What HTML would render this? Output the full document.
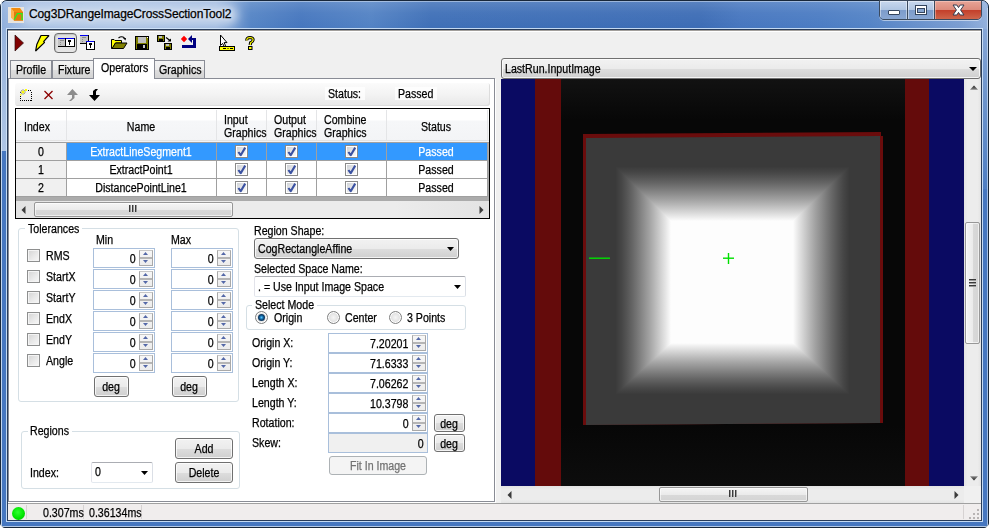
<!DOCTYPE html>
<html><head><meta charset="utf-8">
<style>
*{box-sizing:border-box;}
html,body{margin:0;padding:0;}
body{width:989px;height:528px;position:relative;overflow:hidden;font-family:"Liberation Sans",sans-serif;font-size:12px;color:#000;background:#fff;}
.a{position:absolute;}
.t{position:absolute;white-space:nowrap;line-height:13px;font-size:12px;transform:scaleX(0.885);transform-origin:0 0;-webkit-text-stroke:0.25px currentColor;}
.tr{transform-origin:100% 0;}
.tc{text-align:center;transform-origin:50% 0;}
.tab{position:absolute;border:1px solid #898c95;border-bottom:none;background:linear-gradient(#f3f3f3 0%,#ececec 50%,#dedede 51%,#d3d3d3 100%);}
.tabsel{position:absolute;border:1px solid #898c95;border-bottom:none;background:#fff;}
.grp{position:absolute;border:1px solid #d5dfe5;border-radius:3px;}
.chk{position:absolute;width:13px;height:13px;border:1px solid #8e8f8f;background:linear-gradient(135deg,#d3d3d3 0%,#e9e9e9 55%,#f8f8f8 100%);box-shadow:inset 0 0 0 1px #f4f4f4;}
.spin{position:absolute;border:1px solid #a9bfdb;background:#fff;}
.btn{position:absolute;border:1px solid #707070;border-radius:3px;background:linear-gradient(#f2f2f2 0%,#ebebeb 50%,#dddddd 51%,#cfcfcf 100%);box-shadow:inset 0 0 0 1px rgba(255,255,255,0.75);}
.radio{position:absolute;width:13px;height:13px;border-radius:50%;border:1px solid #7f8080;background:radial-gradient(circle at 50% 50%,#f6f6f6 0%,#e2e2e2 55%,#cfcfcf 100%);box-shadow:inset 0 0 0 1px #fff;}
.gl{position:absolute;background:#a0a0a0;}
.arr{position:absolute;}
</style></head>
<body>
<div class="a" style="left:0;top:0;width:989px;height:528px;border:1px solid #18273a;border-radius:7px 7px 5px 5px;background:#4677c0;"></div>
<div class="a" style="left:1px;top:1px;width:987px;height:28px;border-radius:6px 6px 0 0;background:linear-gradient(90deg,#8eaedc 0px,#9fbae2 14px,#a9c1e3 120px,#9ab6de 215px,#5484c5 250px,#4576be 300px,#5282c4 370px,#3e6fb7 430px,#3c6cb5 700px,#4676bf 740px,#4b7cc3 820px,#5383c6 870px,#7a9dd1 960px,#92b0dc 987px);"></div>
<div class="a" style="left:1px;top:1px;width:987px;height:28px;border-radius:6px 6px 0 0;background:linear-gradient(#dfe9f5 0,rgba(255,255,255,0.15) 1px,rgba(255,255,255,0.05) 12px,rgba(0,0,0,0) 28px);"></div>
<div class="a" style="left:20px;top:5px;width:218px;height:20px;border-radius:10px;background:rgba(198,214,236,0.95);filter:blur(4px);"></div>
<div class="a" style="left:1px;top:29px;width:6px;height:122px;background:linear-gradient(#96b3dc,#aec5e5);"></div>
<div class="a" style="left:982px;top:29px;width:6px;height:160px;background:linear-gradient(#86a6d6,#6e95cc 40%,#4e7ec3 100%);"></div>
<div class="a" style="left:1px;top:1px;width:1px;height:526px;background:rgba(225,236,248,0.8);"></div>
<div class="a" style="left:987px;top:8px;width:1px;height:519px;background:rgba(225,236,248,0.6);"></div>
<div class="a" style="left:1px;top:526px;width:987px;height:1px;background:rgba(225,236,248,0.7);"></div>
<div class="a" style="left:6px;top:28px;width:977px;height:494px;border:1px solid rgba(210,228,248,0.9);"></div>
<div class="a" style="left:7px;top:29px;width:975px;height:492px;border:1px solid #283c5a;background:#f0f0f0;"></div>
<div class="a" style="left:8px;top:30px;width:973px;height:1px;background:#a29f9c;"></div>
<div class="a" style="left:8px;top:31px;width:973px;height:1px;background:#fff;"></div>
<svg class="a" style="left:8px;top:7px" width="16" height="16" viewBox="0 0 16 16">
 <rect x="0" y="0" width="16" height="16" fill="#e8e4de"/>
 <polygon points="3,1 6,5 6,13.8 3,10.5" fill="#ffb24e"/>
 <polygon points="3,1 12,1 15,5 6,5" fill="#f28c0e"/>
 <polygon points="6,5 15,5 15,13.8 6,13.8" fill="#df7a0c"/>
 <polyline points="6.2,12.6 9.4,6.6 14,6.6 14,12.4 15,12.4" fill="none" stroke="#22f022" stroke-width="1.2"/>
</svg>
<div class="t" style="left:29px;top:7px;font-size:12px;line-height:15px;transform:none;letter-spacing:-0.12px;text-shadow:0 0 5px rgba(255,255,255,0.9);">Cog3DRangeImageCrossSectionTool2</div>
<div class="a" style="left:879px;top:0px;width:103px;height:20px;border:1px solid #3b4a5e;border-radius:0 0 5px 5px;overflow:hidden;box-shadow:0 1px 0 rgba(255,255,255,0.5);">
 <div class="a" style="left:0;top:0;width:28px;height:19px;background:linear-gradient(#c8d8ee 0%,#b0c6e2 45%,#7d9ccb 50%,#8aa8d4 100%);border-right:1px solid #3b4a5e;box-shadow:inset 0 0 0 1px rgba(255,255,255,0.45);"></div>
 <div class="a" style="left:28px;top:0;width:27px;height:19px;background:linear-gradient(#c8d8ee 0%,#b0c6e2 45%,#7d9ccb 50%,#8aa8d4 100%);border-right:1px solid #3b4a5e;box-shadow:inset 0 0 0 1px rgba(255,255,255,0.45);"></div>
 <div class="a" style="left:55px;top:0;width:48px;height:19px;background:linear-gradient(#e7a497 0%,#dc8b7c 45%,#c3402b 50%,#cf6a4f 100%);box-shadow:inset 0 0 0 1px rgba(255,220,210,0.45);"></div>
</div>
<div class="a" style="left:888px;top:10px;width:12px;height:5px;background:#fff;border:1px solid #34455e;border-radius:1px;"></div>
<div class="a" style="left:915px;top:5px;width:12px;height:10px;border:1px solid #34455e;background:#fff;"></div>
<div class="a" style="left:917px;top:8px;width:8px;height:5px;border:1px solid #34455e;background:#88a5cf;"></div>
<svg class="a" style="left:952px;top:4px" width="13" height="12" viewBox="0 0 13 12">
 <polygon points="1,1 4.8,1 6.5,3.6 8.2,1 12,1 8.6,6 12,11 8.2,11 6.5,8.4 4.8,11 1,11 4.4,6" fill="#fff" stroke="#343a4e" stroke-width="1" stroke-linejoin="round"/>
</svg>
<div class="a" style="left:54px;top:33px;width:23px;height:20px;border:1px solid #6b6b6b;border-radius:4px;background:linear-gradient(#e2e2e2,#dedede 60%,#e6e6e6);box-shadow:inset 1px 1px 1px #c2c2c2;"></div>
<svg class="a" style="left:0;top:30px" width="270" height="25" viewBox="0 30 270 25">
 <polygon points="15,35 23.5,43 15,51" fill="#800000" stroke="#2b0a0a" stroke-width="0.7"/>
 <polygon points="41,35.5 49,35.5 43.6,41.6 44.6,42.4 35.6,51 36.8,44.6" fill="#ffff00" stroke="#000" stroke-width="1.2" stroke-linejoin="bevel"/>
 <g shape-rendering="crispEdges">
  <rect x="58" y="38" width="8" height="9" fill="#000"/><rect x="58" y="38" width="7" height="8" fill="#c4c4c4"/><rect x="58" y="38" width="7" height="1" fill="#0000f0"/>
  <rect x="60" y="40" width="4" height="1" fill="#8c8c8c"/><rect x="60" y="42" width="1" height="1" fill="#8c8c8c"/><rect x="60" y="44" width="1" height="1" fill="#8c8c8c"/>
  <rect x="65" y="38" width="10" height="9" fill="#000"/><rect x="66" y="38" width="8" height="8" fill="#fff"/><rect x="66" y="38" width="8" height="1" fill="#0000f0"/>
  <rect x="68" y="40" width="3" height="2" fill="#000"/><rect x="69" y="42" width="1" height="3" fill="#000"/>
  <rect x="80" y="35" width="9" height="9" fill="#000"/><rect x="80" y="35" width="8" height="8" fill="#c4c4c4"/><rect x="80" y="35" width="8" height="1" fill="#0000f0"/>
  <rect x="82" y="37" width="4" height="1" fill="#8c8c8c"/><rect x="82" y="39" width="1" height="1" fill="#8c8c8c"/><rect x="82" y="41" width="1" height="1" fill="#8c8c8c"/>
  <rect x="86" y="41" width="9" height="9" fill="#000"/><rect x="87" y="41" width="7" height="8" fill="#fff"/><rect x="86" y="41" width="8" height="1" fill="#0000f0"/>
  <rect x="89" y="43" width="3" height="2" fill="#000"/><rect x="90" y="45" width="1" height="3" fill="#000"/>
 </g>
 <polygon points="111.5,39.5 114,39.5 115,40.5 121.5,40.5 121.5,43 115.5,43 112.5,48.5 111.5,48.5" fill="#ffff00" stroke="#000" stroke-width="1"/>
 <polygon points="112,48.5 115.5,43 127,43 123.5,48.5" fill="#808000" stroke="#000" stroke-width="1"/>
 <path d="M118.5,38 Q121.5,35.5 124.5,38" fill="none" stroke="#000" stroke-width="1.1"/>
 <polygon points="123,38 126,38 125.5,40.5" fill="#000"/>
 <g shape-rendering="crispEdges">
  <rect x="135" y="36" width="14" height="14" fill="#000"/><rect x="136" y="37" width="12" height="12" fill="#808000"/>
  <rect x="138" y="37" width="8" height="6" fill="#c0c0c0"/><rect x="137" y="44" width="10" height="5" fill="#000"/><rect x="143" y="45" width="2" height="3" fill="#c8c8c8"/>
  <rect x="147" y="37" width="1" height="1" fill="#fff"/>
  <rect x="157" y="35" width="8" height="7" fill="#000"/><rect x="158" y="36" width="6" height="5" fill="#808000"/><rect x="159" y="36" width="3" height="2" fill="#c0c0c0"/><rect x="159" y="39" width="4" height="2" fill="#000"/>
  <rect x="164" y="43" width="8" height="7" fill="#000"/><rect x="165" y="44" width="6" height="5" fill="#808000"/><rect x="166" y="44" width="3" height="2" fill="#c0c0c0"/><rect x="166" y="47" width="4" height="2" fill="#000"/>
 </g>
 <path d="M166,37.5 L170,40.5" stroke="#000" stroke-width="1.2"/><polygon points="171,41.5 167.5,41.5 171,38.5" fill="#000"/>
 <polygon points="184,35.8 187.2,39 184,42.2 180.8,39" fill="#ff0000"/>
 <g shape-rendering="crispEdges" fill="#000080">
  <rect x="189" y="38" width="7" height="2"/><rect x="193" y="38" width="3" height="10"/><rect x="182" y="45" width="14" height="3"/>
 </g>
 <polygon points="188,39 192,35 192,43" fill="#000080"/>
 <polygon points="220.5,35 220.5,45.5 222.6,43.4 224.2,46.5 225.6,45.8 224.1,42.6 227,42.6" fill="#fff" stroke="#000" stroke-width="1"/>
 <rect x="219.5" y="46.5" width="15" height="4" fill="#ffff00" stroke="#000" stroke-width="1"/>
 <path d="M223,48.5 h3 M227.5,48.5 h1 M230,48.5 h3" stroke="#000" stroke-width="1"/>
 <path d="M246.8,40.5 Q246.5,37.6 250,37.5 Q253.2,37.5 253.1,40 Q253,41.6 250.6,42.8 L250.2,45" fill="none" stroke="#000" stroke-width="3.2"/>
 <path d="M246.8,40.5 Q246.5,37.6 250,37.5 Q253.2,37.5 253.1,40 Q253,41.6 250.6,42.8 L250.2,45" fill="none" stroke="#ffff00" stroke-width="1.2"/>
 <rect x="248.5" y="46.5" width="3.5" height="3" fill="#ffff00" stroke="#000" stroke-width="1"/>
</svg>
<div class="a" style="left:8px;top:78px;width:487px;height:424px;border:1px solid #898c95;background:#fff;"></div>
<div class="a" style="left:495px;top:79px;width:1px;height:424px;background:#fff;"></div>
<div class="a" style="left:8px;top:502px;width:488px;height:1px;background:#fff;"></div>
<div class="tab" style="left:10px;top:60px;width:42px;height:18px;"></div>
<div class="t" style="left:15.5px;top:64px;">Profile</div>
<div class="tab" style="left:52px;top:60px;width:42px;height:18px;"></div>
<div class="t" style="left:57.5px;top:64px;">Fixture</div>
<div class="tab" style="left:154px;top:60px;width:51px;height:18px;"></div>
<div class="t" style="left:158.5px;top:64px;">Graphics</div>
<div class="tabsel" style="left:93px;top:58px;width:62px;height:21px;"></div>
<div class="t" style="left:100.5px;top:62px;">Operators</div>
<div class="a" style="left:15px;top:83px;width:475px;height:23px;border-radius:3px;background:linear-gradient(#fbfbfb,#f3f3f3 50%,#e7e7e7);box-shadow:inset -1px -1px 0 #dcdcdc;"></div>
<svg class="a" style="left:0;top:80px" width="110" height="25" viewBox="0 80 110 25">
 <g shape-rendering="crispEdges" fill="#000"><rect x="20" y="100" width="1" height="1"/><rect x="22" y="100" width="1" height="1"/><rect x="24" y="100" width="1" height="1"/><rect x="26" y="100" width="1" height="1"/><rect x="28" y="100" width="1" height="1"/><rect x="30" y="100" width="1" height="1"/><rect x="20" y="92" width="1" height="1"/><rect x="31" y="92" width="1" height="1"/><rect x="20" y="94" width="1" height="1"/><rect x="31" y="94" width="1" height="1"/><rect x="20" y="96" width="1" height="1"/><rect x="31" y="96" width="1" height="1"/><rect x="20" y="98" width="1" height="1"/><rect x="31" y="98" width="1" height="1"/><rect x="20" y="100" width="1" height="1"/><rect x="31" y="100" width="1" height="1"/><rect x="26" y="90" width="1" height="1"/><rect x="28" y="90" width="1" height="1"/><rect x="30" y="90" width="1" height="1"/></g>
 <path d="M20,92 L26,92 M23,89 L23,95 M21,90 L25,94 M25,90 L21,94" stroke="#9a9a9a" stroke-width="0.9"/>
 <path d="M21.5,92 L24.5,92 M23,90.5 L23,93.5" stroke="#ffff00" stroke-width="1.4"/>
 <rect x="25" y="89" width="2" height="2" fill="#ffff00"/><rect x="20" y="94" width="1.5" height="1.5" fill="#ffff00"/>
 <path d="M44.5,91 L52.5,99 M52.5,91 L44.5,99" stroke="#8b0000" stroke-width="1.3"/>
 <polygon points="72.4,89 78,95 74.5,95 74.5,98 71,101 69,101 72,98 72,95 67,95" fill="#8c8c8c"/>
 <polygon points="89,95 93,95 93,91 95.5,89 98,89 96,91.5 96,95 100,95 94.5,101" fill="#000"/>
</svg>
<div class="a" style="left:325px;top:87px;width:40px;height:13px;background:#fff;opacity:0.75;"></div>
<div class="t" style="left:327.5px;top:88px;">Status:</div>
<div class="a" style="left:395px;top:87px;width:42px;height:13px;background:#fff;opacity:0.75;"></div>
<div class="t" style="left:397.5px;top:88px;">Passed</div>
<div class="a" style="left:15px;top:108px;width:475px;height:111px;border:1px solid #000;background:#ababab;"></div>
<div class="a" style="left:16px;top:109px;width:473px;height:33px;background:linear-gradient(#fff 0,#fff 11px,#f6f7f9 12px,#f3f4f6 100%);"></div>
<div class="a" style="left:16px;top:140px;width:473px;height:1px;background:#e3e3e3;"></div>
<div class="a" style="left:16px;top:142px;width:473px;height:1px;background:#a0a0a0;"></div>
<div class="a" style="left:16px;top:143px;width:472px;height:53px;background:#fff;"></div>
<div class="a" style="left:16px;top:143px;width:50px;height:53px;background:#f0f0f0;"></div>
<div class="a" style="left:67px;top:143px;width:421px;height:17px;background:#3399ff;"></div>
<div class="gl" style="left:16px;top:160px;width:472px;height:1px;"></div>
<div class="gl" style="left:16px;top:178px;width:472px;height:1px;"></div>
<div class="gl" style="left:16px;top:196px;width:472px;height:1px;"></div>
<div class="gl" style="left:66px;top:143px;width:1px;height:53px;"></div>
<div class="a" style="left:66px;top:110px;width:1px;height:30px;background:#e4e5e7;"></div>
<div class="gl" style="left:216px;top:143px;width:1px;height:53px;"></div>
<div class="a" style="left:216px;top:110px;width:1px;height:30px;background:#e4e5e7;"></div>
<div class="gl" style="left:266px;top:143px;width:1px;height:53px;"></div>
<div class="a" style="left:266px;top:110px;width:1px;height:30px;background:#e4e5e7;"></div>
<div class="gl" style="left:316px;top:143px;width:1px;height:53px;"></div>
<div class="a" style="left:316px;top:110px;width:1px;height:30px;background:#e4e5e7;"></div>
<div class="gl" style="left:386px;top:143px;width:1px;height:53px;"></div>
<div class="a" style="left:386px;top:110px;width:1px;height:30px;background:#e4e5e7;"></div>
<div class="gl" style="left:487px;top:143px;width:1px;height:53px;"></div>
<div class="a" style="left:487px;top:110px;width:1px;height:30px;background:#e4e5e7;"></div>
<div class="t" style="left:23.5px;top:121px;">Index</div>
<div class="t tc" style="left:-9px;width:300px;top:121px;">Name</div>
<div class="t" style="left:223.5px;top:114px;">Input</div>
<div class="t" style="left:223.5px;top:127px;">Graphics</div>
<div class="t" style="left:273.5px;top:114px;">Output</div>
<div class="t" style="left:273.5px;top:127px;">Graphics</div>
<div class="t" style="left:323.5px;top:114px;">Combine</div>
<div class="t" style="left:323.5px;top:127px;">Graphics</div>
<div class="t tc" style="left:286px;width:300px;top:121px;">Status</div>
<div class="t tc" style="left:-109px;width:300px;top:146px;">0</div>
<div class="t tc" style="left:-109px;width:300px;top:164px;">1</div>
<div class="t tc" style="left:-109px;width:300px;top:182px;">2</div>
<div class="t tc" style="left:-9px;width:300px;top:146px;color:#fff;">ExtractLineSegment1</div>
<div class="t tc" style="left:-9px;width:300px;top:164px;">ExtractPoint1</div>
<div class="t tc" style="left:-9px;width:300px;top:182px;">DistancePointLine1</div>
<div class="t tc" style="left:286px;width:300px;top:146px;color:#fff;">Passed</div>
<div class="t tc" style="left:286px;width:300px;top:164px;">Passed</div>
<div class="t tc" style="left:286px;width:300px;top:182px;">Passed</div>
<svg width="0" height="0" style="position:absolute"><defs><linearGradient id="cg" x1="0" y1="0" x2="1" y2="1"><stop offset="0" stop-color="#cfd2d6"/><stop offset="0.6" stop-color="#ebecee"/><stop offset="1" stop-color="#fafafa"/></linearGradient></defs></svg>
<svg class="a" style="left:235px;top:145px" width="13" height="13" viewBox="0 0 13 13"><rect x="0.5" y="0.5" width="12" height="12" fill="#fff" stroke="#8a8a8a"/><rect x="2" y="2" width="9" height="9" fill="url(#cg)"/><path d="M3.4,7 L5.7,10.2 L10.2,2.6" fill="none" stroke="#3b52a2" stroke-width="2.1" stroke-linejoin="round"/></svg>
<svg class="a" style="left:285px;top:145px" width="13" height="13" viewBox="0 0 13 13"><rect x="0.5" y="0.5" width="12" height="12" fill="#fff" stroke="#8a8a8a"/><rect x="2" y="2" width="9" height="9" fill="url(#cg)"/><path d="M3.4,7 L5.7,10.2 L10.2,2.6" fill="none" stroke="#3b52a2" stroke-width="2.1" stroke-linejoin="round"/></svg>
<svg class="a" style="left:345px;top:145px" width="13" height="13" viewBox="0 0 13 13"><rect x="0.5" y="0.5" width="12" height="12" fill="#fff" stroke="#8a8a8a"/><rect x="2" y="2" width="9" height="9" fill="url(#cg)"/><path d="M3.4,7 L5.7,10.2 L10.2,2.6" fill="none" stroke="#3b52a2" stroke-width="2.1" stroke-linejoin="round"/></svg>
<svg class="a" style="left:235px;top:163px" width="13" height="13" viewBox="0 0 13 13"><rect x="0.5" y="0.5" width="12" height="12" fill="#fff" stroke="#8a8a8a"/><rect x="2" y="2" width="9" height="9" fill="url(#cg)"/><path d="M3.4,7 L5.7,10.2 L10.2,2.6" fill="none" stroke="#3b52a2" stroke-width="2.1" stroke-linejoin="round"/></svg>
<svg class="a" style="left:285px;top:163px" width="13" height="13" viewBox="0 0 13 13"><rect x="0.5" y="0.5" width="12" height="12" fill="#fff" stroke="#8a8a8a"/><rect x="2" y="2" width="9" height="9" fill="url(#cg)"/><path d="M3.4,7 L5.7,10.2 L10.2,2.6" fill="none" stroke="#3b52a2" stroke-width="2.1" stroke-linejoin="round"/></svg>
<svg class="a" style="left:345px;top:163px" width="13" height="13" viewBox="0 0 13 13"><rect x="0.5" y="0.5" width="12" height="12" fill="#fff" stroke="#8a8a8a"/><rect x="2" y="2" width="9" height="9" fill="url(#cg)"/><path d="M3.4,7 L5.7,10.2 L10.2,2.6" fill="none" stroke="#3b52a2" stroke-width="2.1" stroke-linejoin="round"/></svg>
<svg class="a" style="left:235px;top:181px" width="13" height="13" viewBox="0 0 13 13"><rect x="0.5" y="0.5" width="12" height="12" fill="#fff" stroke="#8a8a8a"/><rect x="2" y="2" width="9" height="9" fill="url(#cg)"/><path d="M3.4,7 L5.7,10.2 L10.2,2.6" fill="none" stroke="#3b52a2" stroke-width="2.1" stroke-linejoin="round"/></svg>
<svg class="a" style="left:285px;top:181px" width="13" height="13" viewBox="0 0 13 13"><rect x="0.5" y="0.5" width="12" height="12" fill="#fff" stroke="#8a8a8a"/><rect x="2" y="2" width="9" height="9" fill="url(#cg)"/><path d="M3.4,7 L5.7,10.2 L10.2,2.6" fill="none" stroke="#3b52a2" stroke-width="2.1" stroke-linejoin="round"/></svg>
<svg class="a" style="left:345px;top:181px" width="13" height="13" viewBox="0 0 13 13"><rect x="0.5" y="0.5" width="12" height="12" fill="#fff" stroke="#8a8a8a"/><rect x="2" y="2" width="9" height="9" fill="url(#cg)"/><path d="M3.4,7 L5.7,10.2 L10.2,2.6" fill="none" stroke="#3b52a2" stroke-width="2.1" stroke-linejoin="round"/></svg>
<div class="a" style="left:16px;top:201px;width:473px;height:17px;background:linear-gradient(90deg,#e3e3e3,#ececec 20%,#ececec 80%,#e3e3e3);"></div>
<svg class="a" style="left:21px;top:206px" width="5" height="8" viewBox="0 0 5 8"><polygon points="4.5,0 0.5,4 4.5,8" fill="#3b3b3b"/></svg>
<svg class="a" style="left:479px;top:206px" width="5" height="8" viewBox="0 0 5 8"><polygon points="0.5,0 4.5,4 0.5,8" fill="#3b3b3b"/></svg>
<div class="a" style="left:34px;top:202px;width:199px;height:15px;border:1px solid #979797;border-radius:2px;background:linear-gradient(#f5f5f5,#ebebeb 50%,#d9d9d9 51%,#d4d4d4);box-shadow:inset 0 0 0 1px rgba(255,255,255,0.6);"></div>
<div class="a" style="left:129px;top:205px;width:1px;height:7px;background:#3a3a3a;box-shadow:1px 0 0 #9a9a9a,3px 0 0 #3a3a3a,4px 0 0 #9a9a9a,6px 0 0 #3a3a3a,7px 0 0 #9a9a9a;"></div>
<div class="grp" style="left:18px;top:228px;width:221px;height:174px;"></div>
<div class="a" style="left:25px;top:222px;width:57px;height:12px;background:#fff;"></div>
<div class="t" style="left:27.5px;top:223px;">Tolerances</div>
<div class="t" style="left:95.5px;top:234px;">Min</div>
<div class="t" style="left:170.5px;top:234px;">Max</div>
<div class="chk" style="left:27px;top:249px;"></div>
<div class="t" style="left:45.5px;top:250px;">RMS</div>
<div class="chk" style="left:27px;top:270px;"></div>
<div class="t" style="left:45.5px;top:271px;">StartX</div>
<div class="chk" style="left:27px;top:291px;"></div>
<div class="t" style="left:45.5px;top:292px;">StartY</div>
<div class="chk" style="left:27px;top:312px;"></div>
<div class="t" style="left:45.5px;top:313px;">EndX</div>
<div class="chk" style="left:27px;top:333px;"></div>
<div class="t" style="left:45.5px;top:334px;">EndY</div>
<div class="chk" style="left:27px;top:354px;"></div>
<div class="t" style="left:45.5px;top:355px;">Angle</div>
<div class="spin" style="left:93px;top:248px;width:62px;height:20px;background:#fff;"></div>
<div class="a" style="left:139px;top:250px;width:14px;height:16px;border:1px solid #a9a9a9;border-top-color:#c8c8c8;background:linear-gradient(#f7f7f7,#ececec);"></div>
<div class="a" style="left:140px;top:257px;width:12px;height:2px;background:#b5b5b5;"></div>
<svg class="a" style="left:143px;top:252px" width="5" height="3" viewBox="0 0 5 3"><polygon points="0,3 2.5,0 5,3" fill="#5468a8"/></svg>
<svg class="a" style="left:143px;top:260px" width="5" height="3" viewBox="0 0 5 3"><polygon points="0,0 2.5,3 5,0" fill="#5468a8"/></svg>
<div class="t tr" style="right:853.5px;top:253px;">0</div>
<div class="spin" style="left:171px;top:248px;width:62px;height:20px;background:#fff;"></div>
<div class="a" style="left:217px;top:250px;width:14px;height:16px;border:1px solid #a9a9a9;border-top-color:#c8c8c8;background:linear-gradient(#f7f7f7,#ececec);"></div>
<div class="a" style="left:218px;top:257px;width:12px;height:2px;background:#b5b5b5;"></div>
<svg class="a" style="left:221px;top:252px" width="5" height="3" viewBox="0 0 5 3"><polygon points="0,3 2.5,0 5,3" fill="#5468a8"/></svg>
<svg class="a" style="left:221px;top:260px" width="5" height="3" viewBox="0 0 5 3"><polygon points="0,0 2.5,3 5,0" fill="#5468a8"/></svg>
<div class="t tr" style="right:775.5px;top:253px;">0</div>
<div class="spin" style="left:93px;top:269px;width:62px;height:20px;background:#fff;"></div>
<div class="a" style="left:139px;top:271px;width:14px;height:16px;border:1px solid #a9a9a9;border-top-color:#c8c8c8;background:linear-gradient(#f7f7f7,#ececec);"></div>
<div class="a" style="left:140px;top:278px;width:12px;height:2px;background:#b5b5b5;"></div>
<svg class="a" style="left:143px;top:273px" width="5" height="3" viewBox="0 0 5 3"><polygon points="0,3 2.5,0 5,3" fill="#5468a8"/></svg>
<svg class="a" style="left:143px;top:281px" width="5" height="3" viewBox="0 0 5 3"><polygon points="0,0 2.5,3 5,0" fill="#5468a8"/></svg>
<div class="t tr" style="right:853.5px;top:274px;">0</div>
<div class="spin" style="left:171px;top:269px;width:62px;height:20px;background:#fff;"></div>
<div class="a" style="left:217px;top:271px;width:14px;height:16px;border:1px solid #a9a9a9;border-top-color:#c8c8c8;background:linear-gradient(#f7f7f7,#ececec);"></div>
<div class="a" style="left:218px;top:278px;width:12px;height:2px;background:#b5b5b5;"></div>
<svg class="a" style="left:221px;top:273px" width="5" height="3" viewBox="0 0 5 3"><polygon points="0,3 2.5,0 5,3" fill="#5468a8"/></svg>
<svg class="a" style="left:221px;top:281px" width="5" height="3" viewBox="0 0 5 3"><polygon points="0,0 2.5,3 5,0" fill="#5468a8"/></svg>
<div class="t tr" style="right:775.5px;top:274px;">0</div>
<div class="spin" style="left:93px;top:290px;width:62px;height:20px;background:#fff;"></div>
<div class="a" style="left:139px;top:292px;width:14px;height:16px;border:1px solid #a9a9a9;border-top-color:#c8c8c8;background:linear-gradient(#f7f7f7,#ececec);"></div>
<div class="a" style="left:140px;top:299px;width:12px;height:2px;background:#b5b5b5;"></div>
<svg class="a" style="left:143px;top:294px" width="5" height="3" viewBox="0 0 5 3"><polygon points="0,3 2.5,0 5,3" fill="#5468a8"/></svg>
<svg class="a" style="left:143px;top:302px" width="5" height="3" viewBox="0 0 5 3"><polygon points="0,0 2.5,3 5,0" fill="#5468a8"/></svg>
<div class="t tr" style="right:853.5px;top:295px;">0</div>
<div class="spin" style="left:171px;top:290px;width:62px;height:20px;background:#fff;"></div>
<div class="a" style="left:217px;top:292px;width:14px;height:16px;border:1px solid #a9a9a9;border-top-color:#c8c8c8;background:linear-gradient(#f7f7f7,#ececec);"></div>
<div class="a" style="left:218px;top:299px;width:12px;height:2px;background:#b5b5b5;"></div>
<svg class="a" style="left:221px;top:294px" width="5" height="3" viewBox="0 0 5 3"><polygon points="0,3 2.5,0 5,3" fill="#5468a8"/></svg>
<svg class="a" style="left:221px;top:302px" width="5" height="3" viewBox="0 0 5 3"><polygon points="0,0 2.5,3 5,0" fill="#5468a8"/></svg>
<div class="t tr" style="right:775.5px;top:295px;">0</div>
<div class="spin" style="left:93px;top:311px;width:62px;height:20px;background:#fff;"></div>
<div class="a" style="left:139px;top:313px;width:14px;height:16px;border:1px solid #a9a9a9;border-top-color:#c8c8c8;background:linear-gradient(#f7f7f7,#ececec);"></div>
<div class="a" style="left:140px;top:320px;width:12px;height:2px;background:#b5b5b5;"></div>
<svg class="a" style="left:143px;top:315px" width="5" height="3" viewBox="0 0 5 3"><polygon points="0,3 2.5,0 5,3" fill="#5468a8"/></svg>
<svg class="a" style="left:143px;top:323px" width="5" height="3" viewBox="0 0 5 3"><polygon points="0,0 2.5,3 5,0" fill="#5468a8"/></svg>
<div class="t tr" style="right:853.5px;top:316px;">0</div>
<div class="spin" style="left:171px;top:311px;width:62px;height:20px;background:#fff;"></div>
<div class="a" style="left:217px;top:313px;width:14px;height:16px;border:1px solid #a9a9a9;border-top-color:#c8c8c8;background:linear-gradient(#f7f7f7,#ececec);"></div>
<div class="a" style="left:218px;top:320px;width:12px;height:2px;background:#b5b5b5;"></div>
<svg class="a" style="left:221px;top:315px" width="5" height="3" viewBox="0 0 5 3"><polygon points="0,3 2.5,0 5,3" fill="#5468a8"/></svg>
<svg class="a" style="left:221px;top:323px" width="5" height="3" viewBox="0 0 5 3"><polygon points="0,0 2.5,3 5,0" fill="#5468a8"/></svg>
<div class="t tr" style="right:775.5px;top:316px;">0</div>
<div class="spin" style="left:93px;top:332px;width:62px;height:20px;background:#fff;"></div>
<div class="a" style="left:139px;top:334px;width:14px;height:16px;border:1px solid #a9a9a9;border-top-color:#c8c8c8;background:linear-gradient(#f7f7f7,#ececec);"></div>
<div class="a" style="left:140px;top:341px;width:12px;height:2px;background:#b5b5b5;"></div>
<svg class="a" style="left:143px;top:336px" width="5" height="3" viewBox="0 0 5 3"><polygon points="0,3 2.5,0 5,3" fill="#5468a8"/></svg>
<svg class="a" style="left:143px;top:344px" width="5" height="3" viewBox="0 0 5 3"><polygon points="0,0 2.5,3 5,0" fill="#5468a8"/></svg>
<div class="t tr" style="right:853.5px;top:337px;">0</div>
<div class="spin" style="left:171px;top:332px;width:62px;height:20px;background:#fff;"></div>
<div class="a" style="left:217px;top:334px;width:14px;height:16px;border:1px solid #a9a9a9;border-top-color:#c8c8c8;background:linear-gradient(#f7f7f7,#ececec);"></div>
<div class="a" style="left:218px;top:341px;width:12px;height:2px;background:#b5b5b5;"></div>
<svg class="a" style="left:221px;top:336px" width="5" height="3" viewBox="0 0 5 3"><polygon points="0,3 2.5,0 5,3" fill="#5468a8"/></svg>
<svg class="a" style="left:221px;top:344px" width="5" height="3" viewBox="0 0 5 3"><polygon points="0,0 2.5,3 5,0" fill="#5468a8"/></svg>
<div class="t tr" style="right:775.5px;top:337px;">0</div>
<div class="spin" style="left:93px;top:353px;width:62px;height:20px;background:#fff;"></div>
<div class="a" style="left:139px;top:355px;width:14px;height:16px;border:1px solid #a9a9a9;border-top-color:#c8c8c8;background:linear-gradient(#f7f7f7,#ececec);"></div>
<div class="a" style="left:140px;top:362px;width:12px;height:2px;background:#b5b5b5;"></div>
<svg class="a" style="left:143px;top:357px" width="5" height="3" viewBox="0 0 5 3"><polygon points="0,3 2.5,0 5,3" fill="#5468a8"/></svg>
<svg class="a" style="left:143px;top:365px" width="5" height="3" viewBox="0 0 5 3"><polygon points="0,0 2.5,3 5,0" fill="#5468a8"/></svg>
<div class="t tr" style="right:853.5px;top:358px;">0</div>
<div class="spin" style="left:171px;top:353px;width:62px;height:20px;background:#fff;"></div>
<div class="a" style="left:217px;top:355px;width:14px;height:16px;border:1px solid #a9a9a9;border-top-color:#c8c8c8;background:linear-gradient(#f7f7f7,#ececec);"></div>
<div class="a" style="left:218px;top:362px;width:12px;height:2px;background:#b5b5b5;"></div>
<svg class="a" style="left:221px;top:357px" width="5" height="3" viewBox="0 0 5 3"><polygon points="0,3 2.5,0 5,3" fill="#5468a8"/></svg>
<svg class="a" style="left:221px;top:365px" width="5" height="3" viewBox="0 0 5 3"><polygon points="0,0 2.5,3 5,0" fill="#5468a8"/></svg>
<div class="t tr" style="right:775.5px;top:358px;">0</div>
<div class="btn" style="left:94px;top:376px;width:35px;height:21px;"></div>
<div class="t tc" style="left:-39px;width:300px;top:381px;">deg</div>
<div class="btn" style="left:172px;top:376px;width:35px;height:21px;"></div>
<div class="t tc" style="left:39px;width:300px;top:381px;">deg</div>
<div class="grp" style="left:21px;top:431px;width:219px;height:58px;"></div>
<div class="a" style="left:28px;top:425px;width:44px;height:12px;background:#fff;"></div>
<div class="t" style="left:29.5px;top:425px;">Regions</div>
<div class="btn" style="left:175px;top:438px;width:58px;height:21px;"></div>
<div class="t tc" style="left:53.5px;width:300px;top:443px;">Add</div>
<div class="btn" style="left:175px;top:462px;width:58px;height:21px;"></div>
<div class="t tc" style="left:53.5px;width:300px;top:467px;">Delete</div>
<div class="t" style="left:29.5px;top:467px;">Index:</div>
<div class="a" style="left:91px;top:462px;width:62px;height:21px;border:1px solid;border-color:#abadb3 #dbdfe6 #e3e9ef #e2e3ea;border-radius:2px;background:#fff;"></div>
<div class="t" style="left:94.5px;top:466px;">0</div>
<svg class="a" style="left:141px;top:471px" width="7" height="4" viewBox="0 0 7 4"><polygon points="0,0 7,0 3.5,4" fill="#000"/></svg>
<div class="t" style="left:253.5px;top:225px;">Region Shape:</div>
<div class="btn" style="left:254px;top:238px;width:205px;height:21px;"></div>
<div class="t" style="left:257.5px;top:243px;">CogRectangleAffine</div>
<svg class="a" style="left:447px;top:247px" width="7" height="4" viewBox="0 0 7 4"><polygon points="0,0 7,0 3.5,4" fill="#000"/></svg>
<div class="t" style="left:253.5px;top:263px;">Selected Space Name:</div>
<div class="a" style="left:254px;top:276px;width:212px;height:21px;border:1px solid;border-color:#abadb3 #dbdfe6 #e3e9ef #e2e3ea;border-radius:2px;background:#fff;"></div>
<div class="t" style="left:257.5px;top:281px;">. = Use Input Image Space</div>
<svg class="a" style="left:454px;top:285px" width="7" height="4" viewBox="0 0 7 4"><polygon points="0,0 7,0 3.5,4" fill="#000"/></svg>
<div class="grp" style="left:246px;top:305px;width:220px;height:25px;"></div>
<div class="a" style="left:252px;top:299px;width:65px;height:12px;background:#fff;"></div>
<div class="t" style="left:254.5px;top:299px;">Select Mode</div>
<div class="radio" style="left:255px;top:311px;"></div>
<div class="a" style="left:258px;top:314px;width:7px;height:7px;border-radius:50%;background:radial-gradient(circle at 50% 50%,#5ec2f2 0%,#2186c8 25%,#0d3f6c 52%,#132a44 100%);"></div>
<div class="t" style="left:273.5px;top:312px;">Origin</div>
<div class="radio" style="left:327px;top:311px;"></div>
<div class="t" style="left:344.5px;top:312px;">Center</div>
<div class="radio" style="left:389px;top:311px;"></div>
<div class="t" style="left:406.5px;top:312px;">3 Points</div>
<div class="t" style="left:251.5px;top:337px;">Origin X:</div>
<div class="t" style="left:251.5px;top:357px;">Origin Y:</div>
<div class="t" style="left:251.5px;top:377px;">Length X:</div>
<div class="t" style="left:251.5px;top:397px;">Length Y:</div>
<div class="t" style="left:251.5px;top:417px;">Rotation:</div>
<div class="t" style="left:251.5px;top:437px;">Skew:</div>
<div class="spin" style="left:328px;top:333px;width:100px;height:20px;background:#fff;"></div>
<div class="a" style="left:412px;top:335px;width:14px;height:16px;border:1px solid #a9a9a9;border-top-color:#c8c8c8;background:linear-gradient(#f7f7f7,#ececec);"></div>
<div class="a" style="left:413px;top:342px;width:12px;height:2px;background:#b5b5b5;"></div>
<svg class="a" style="left:416px;top:337px" width="5" height="3" viewBox="0 0 5 3"><polygon points="0,3 2.5,0 5,3" fill="#5468a8"/></svg>
<svg class="a" style="left:416px;top:345px" width="5" height="3" viewBox="0 0 5 3"><polygon points="0,0 2.5,3 5,0" fill="#5468a8"/></svg>
<div class="t tr" style="right:580.5px;top:338px;">7.20201</div>
<div class="spin" style="left:328px;top:353px;width:100px;height:20px;background:#fff;"></div>
<div class="a" style="left:412px;top:355px;width:14px;height:16px;border:1px solid #a9a9a9;border-top-color:#c8c8c8;background:linear-gradient(#f7f7f7,#ececec);"></div>
<div class="a" style="left:413px;top:362px;width:12px;height:2px;background:#b5b5b5;"></div>
<svg class="a" style="left:416px;top:357px" width="5" height="3" viewBox="0 0 5 3"><polygon points="0,3 2.5,0 5,3" fill="#5468a8"/></svg>
<svg class="a" style="left:416px;top:365px" width="5" height="3" viewBox="0 0 5 3"><polygon points="0,0 2.5,3 5,0" fill="#5468a8"/></svg>
<div class="t tr" style="right:580.5px;top:358px;">71.6333</div>
<div class="spin" style="left:328px;top:373px;width:100px;height:20px;background:#fff;"></div>
<div class="a" style="left:412px;top:375px;width:14px;height:16px;border:1px solid #a9a9a9;border-top-color:#c8c8c8;background:linear-gradient(#f7f7f7,#ececec);"></div>
<div class="a" style="left:413px;top:382px;width:12px;height:2px;background:#b5b5b5;"></div>
<svg class="a" style="left:416px;top:377px" width="5" height="3" viewBox="0 0 5 3"><polygon points="0,3 2.5,0 5,3" fill="#5468a8"/></svg>
<svg class="a" style="left:416px;top:385px" width="5" height="3" viewBox="0 0 5 3"><polygon points="0,0 2.5,3 5,0" fill="#5468a8"/></svg>
<div class="t tr" style="right:580.5px;top:378px;">7.06262</div>
<div class="spin" style="left:328px;top:393px;width:100px;height:20px;background:#fff;"></div>
<div class="a" style="left:412px;top:395px;width:14px;height:16px;border:1px solid #a9a9a9;border-top-color:#c8c8c8;background:linear-gradient(#f7f7f7,#ececec);"></div>
<div class="a" style="left:413px;top:402px;width:12px;height:2px;background:#b5b5b5;"></div>
<svg class="a" style="left:416px;top:397px" width="5" height="3" viewBox="0 0 5 3"><polygon points="0,3 2.5,0 5,3" fill="#5468a8"/></svg>
<svg class="a" style="left:416px;top:405px" width="5" height="3" viewBox="0 0 5 3"><polygon points="0,0 2.5,3 5,0" fill="#5468a8"/></svg>
<div class="t tr" style="right:580.5px;top:398px;">10.3798</div>
<div class="spin" style="left:328px;top:413px;width:100px;height:20px;background:#fff;"></div>
<div class="a" style="left:412px;top:415px;width:14px;height:16px;border:1px solid #a9a9a9;border-top-color:#c8c8c8;background:linear-gradient(#f7f7f7,#ececec);"></div>
<div class="a" style="left:413px;top:422px;width:12px;height:2px;background:#b5b5b5;"></div>
<svg class="a" style="left:416px;top:417px" width="5" height="3" viewBox="0 0 5 3"><polygon points="0,3 2.5,0 5,3" fill="#5468a8"/></svg>
<svg class="a" style="left:416px;top:425px" width="5" height="3" viewBox="0 0 5 3"><polygon points="0,0 2.5,3 5,0" fill="#5468a8"/></svg>
<div class="t tr" style="right:580.5px;top:418px;">0</div>
<div class="spin" style="left:328px;top:433px;width:100px;height:20px;background:#f0f0f0;"></div>
<div class="t tr" style="right:565.5px;top:438px;">0</div>
<div class="btn" style="left:434px;top:414px;width:31px;height:18px;"></div>
<div class="t tc" style="left:299px;width:300px;top:418px;">deg</div>
<div class="btn" style="left:434px;top:434px;width:31px;height:18px;"></div>
<div class="t tc" style="left:299px;width:300px;top:438px;">deg</div>
<div class="a" style="left:329px;top:456px;width:98px;height:19px;border:1px solid #adb2b5;border-radius:3px;background:#f4f4f4;"></div>
<div class="t tc" style="left:228px;width:300px;top:460px;color:#727272;">Fit In Image</div>
<div class="btn" style="left:501px;top:58px;width:480px;height:21px;"></div>
<div class="t" style="left:504.5px;top:63px;">LastRun.InputImage</div>
<svg class="a" style="left:969px;top:67px" width="8" height="4" viewBox="0 0 8 4"><polygon points="0,0 8,0 4,4" fill="#000"/></svg>
<svg class="a" style="left:501px;top:79px" width="463" height="407" viewBox="501 79 463 407">
 <defs>
  <linearGradient id="gh" x1="616" y1="0" x2="849" y2="0" gradientUnits="userSpaceOnUse"><stop offset="0.0000" stop-color="#3b3b3b"/><stop offset="0.0236" stop-color="#464646"/><stop offset="0.0472" stop-color="#555555"/><stop offset="0.0708" stop-color="#666666"/><stop offset="0.0944" stop-color="#797979"/><stop offset="0.1180" stop-color="#8d8d8d"/><stop offset="0.1416" stop-color="#a1a1a1"/><stop offset="0.1652" stop-color="#b7b7b7"/><stop offset="0.1888" stop-color="#cecece"/><stop offset="0.2124" stop-color="#e5e5e5"/><stop offset="0.2361" stop-color="#fdfdfd"/><stop offset="0.7597" stop-color="#fdfdfd"/><stop offset="0.7837" stop-color="#e5e5e5"/><stop offset="0.8077" stop-color="#cecece"/><stop offset="0.8318" stop-color="#b7b7b7"/><stop offset="0.8558" stop-color="#a1a1a1"/><stop offset="0.8798" stop-color="#8d8d8d"/><stop offset="0.9039" stop-color="#797979"/><stop offset="0.9279" stop-color="#666666"/><stop offset="0.9519" stop-color="#555555"/><stop offset="0.9760" stop-color="#464646"/><stop offset="1.0000" stop-color="#3b3b3b"/></linearGradient>
  <linearGradient id="gt" x1="0" y1="167" x2="0" y2="221" gradientUnits="userSpaceOnUse"><stop offset="0.0000" stop-color="#3b3b3b"/><stop offset="0.1000" stop-color="#464646"/><stop offset="0.2000" stop-color="#555555"/><stop offset="0.3000" stop-color="#666666"/><stop offset="0.4000" stop-color="#797979"/><stop offset="0.5000" stop-color="#8d8d8d"/><stop offset="0.6000" stop-color="#a1a1a1"/><stop offset="0.7000" stop-color="#b7b7b7"/><stop offset="0.8000" stop-color="#cecece"/><stop offset="0.9000" stop-color="#e5e5e5"/><stop offset="1.0000" stop-color="#fdfdfd"/></linearGradient>
  <linearGradient id="gb" x1="0" y1="394" x2="0" y2="343" gradientUnits="userSpaceOnUse"><stop offset="0.0000" stop-color="#3b3b3b"/><stop offset="0.1000" stop-color="#464646"/><stop offset="0.2000" stop-color="#555555"/><stop offset="0.3000" stop-color="#666666"/><stop offset="0.4000" stop-color="#797979"/><stop offset="0.5000" stop-color="#8d8d8d"/><stop offset="0.6000" stop-color="#a1a1a1"/><stop offset="0.7000" stop-color="#b7b7b7"/><stop offset="0.8000" stop-color="#cecece"/><stop offset="0.9000" stop-color="#e5e5e5"/><stop offset="1.0000" stop-color="#fdfdfd"/></linearGradient>
 </defs>
 <linearGradient id="bk" x1="0" y1="79" x2="0" y2="486" gradientUnits="userSpaceOnUse"><stop offset="0" stop-color="#121212"/><stop offset="0.1" stop-color="#070707"/><stop offset="0.85" stop-color="#070707"/><stop offset="1" stop-color="#0d0d0d"/></linearGradient><rect x="501" y="79" width="463" height="407" fill="url(#bk)"/>
 <rect x="501" y="79" width="34" height="407" fill="#0a0a62"/>
 <rect x="535" y="79" width="26" height="407" fill="#640b0b"/>
 <rect x="905" y="79" width="24" height="407" fill="#640b0b"/>
 <rect x="929" y="79" width="35" height="407" fill="#0a0a62"/>
 <polygon points="583,134 881,132 881,136 883,136 883,423 583,425" fill="#6a0c0c"/>
 <polygon points="586,138 880,136 880,423 586,425" fill="#3a3a3a"/>
 <rect x="616" y="167" width="233" height="227" fill="url(#gh)"/>
 <polygon points="616,167 849,167 793,221 671,221" fill="url(#gt)"/>
 <polygon points="616,394 849,394 793,343 671,343" fill="url(#gb)"/>
 <rect x="671" y="221" width="122" height="122" fill="#fdfdfd"/>
 <rect x="589" y="257.5" width="21" height="1.4" fill="#00e000"/>
 <rect x="723" y="257.5" width="11" height="1.4" fill="#00e000"/>
 <rect x="727.8" y="253" width="1.4" height="11" fill="#00e000"/>
</svg>
<div class="a" style="left:964px;top:79px;width:17px;height:407px;background:linear-gradient(90deg,#e3e3e3,#ececec 20%,#ececec 80%,#e3e3e3);"></div>
<svg class="a" style="left:969.5px;top:85px" width="8" height="5" viewBox="0 0 8 5"><defs><linearGradient id="ua" x1="0" y1="0" x2="0" y2="1"><stop offset="0" stop-color="#1e1e1e"/><stop offset="1" stop-color="#8a8a8a"/></linearGradient></defs><polygon points="0,4.8 4,0.4 8,4.8" fill="url(#ua)"/></svg>
<svg class="a" style="left:969.5px;top:475.5px" width="8" height="5" viewBox="0 0 8 5"><defs><linearGradient id="da" x1="0" y1="0" x2="0" y2="1"><stop offset="0" stop-color="#8a8a8a"/><stop offset="1" stop-color="#1e1e1e"/></linearGradient></defs><polygon points="0,0.2 4,4.6 8,0.2" fill="url(#da)"/></svg>
<div class="a" style="left:965px;top:222px;width:15px;height:122px;border:1px solid #979797;border-radius:2px;background:linear-gradient(90deg,#f5f5f5,#ebebeb 50%,#d9d9d9 51%,#d4d4d4);box-shadow:inset 0 0 0 1px rgba(255,255,255,0.6);"></div>
<div class="a" style="left:969px;top:279px;width:7px;height:1px;background:#3a3a3a;box-shadow:0 1px 0 #9a9a9a,0 3px 0 #3a3a3a,0 4px 0 #9a9a9a,0 6px 0 #3a3a3a,0 7px 0 #9a9a9a;"></div>
<div class="a" style="left:501px;top:486px;width:463px;height:17px;background:linear-gradient(#e3e3e3,#ececec 20%,#ececec 80%,#e3e3e3);"></div>
<div class="a" style="left:964px;top:486px;width:17px;height:17px;background:#f0f0f0;"></div>
<svg class="a" style="left:507px;top:491px" width="5" height="8" viewBox="0 0 5 8"><polygon points="4.5,0 0.5,4 4.5,8" fill="#3b3b3b"/></svg>
<svg class="a" style="left:954px;top:491px" width="5" height="8" viewBox="0 0 5 8"><polygon points="0.5,0 4.5,4 0.5,8" fill="#3b3b3b"/></svg>
<div class="a" style="left:659px;top:487px;width:149px;height:15px;border:1px solid #979797;border-radius:2px;background:linear-gradient(#f5f5f5,#ebebeb 50%,#d9d9d9 51%,#d4d4d4);box-shadow:inset 0 0 0 1px rgba(255,255,255,0.6);"></div>
<div class="a" style="left:729px;top:490px;width:1px;height:7px;background:#3a3a3a;box-shadow:1px 0 0 #9a9a9a,3px 0 0 #3a3a3a,4px 0 0 #9a9a9a,6px 0 0 #3a3a3a,7px 0 0 #9a9a9a;"></div>
<div class="a" style="left:8px;top:503px;width:973px;height:17px;background:#f0eded;border-top:1px solid #a0a0a0;"></div>
<div class="a" style="left:12px;top:507px;width:13px;height:13px;border-radius:50%;background:radial-gradient(circle at 45% 40%,#30ff30 0%,#00e600 55%,#00b000 100%);"></div>
<div class="a" style="left:26px;top:505px;width:1px;height:14px;background:#d6d2d2;"></div>
<div class="a" style="left:83px;top:505px;width:1px;height:14px;background:#d6d2d2;"></div>
<div class="a" style="left:141px;top:505px;width:1px;height:14px;background:#d6d2d2;"></div>
<div class="a" style="left:963px;top:505px;width:1px;height:14px;background:#d6d2d2;"></div>
<div class="t" style="left:42.5px;top:507px;">0.307ms</div>
<div class="t" style="left:88.5px;top:507px;">0.36134ms</div>
<div class="a" style="left:977px;top:509px;width:2px;height:2px;background:#b8b4b4;"></div>
<div class="a" style="left:977px;top:513px;width:2px;height:2px;background:#b8b4b4;"></div>
<div class="a" style="left:977px;top:517px;width:2px;height:2px;background:#b8b4b4;"></div>
<div class="a" style="left:973px;top:513px;width:2px;height:2px;background:#b8b4b4;"></div>
<div class="a" style="left:973px;top:517px;width:2px;height:2px;background:#b8b4b4;"></div>
<div class="a" style="left:969px;top:517px;width:2px;height:2px;background:#b8b4b4;"></div>
</body></html>
